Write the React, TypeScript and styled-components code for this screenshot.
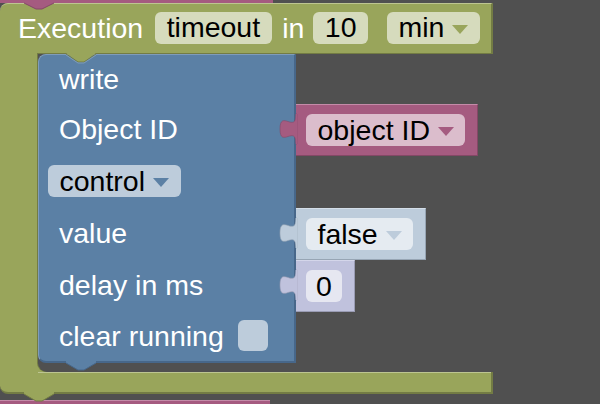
import React from "react";
import styled, { createGlobalStyle } from "styled-components";

const GlobalStyle = createGlobalStyle`
  html, body {
    margin: 0;
    padding: 0;
    background: #505050;
  }
  body {
    font-family: "Liberation Sans", Arial, sans-serif;
  }
`;

const c = {
  canvas: "#505050",
  green: "#99a55b",
  greenLight: "#bdc591",
  greenDark: "#737c44",
  greenField: "#d6dbbd",
  blue: "#5b80a5",
  blueLight: "#7f9cba",
  blueDark: "#47678a",
  blueField: "#bdccdb",
  pink: "#a55b80",
  pinkLight: "#c48ba8",
  pinkDark: "#844866",
  pinkField: "#dbbdcc",
  bool: "#bdccdb",
  boolLight: "#d4dee9",
  boolDark: "#97a5b4",
  boolField: "#e5ebf1",
  num: "#c0c2dd",
  numLight: "#d4d6ea",
  numDark: "#9a9cb4",
  numField: "#e6e7f1",
};

const FONT = 28.5;

const Canvas = styled.div`
  width: 600px;
  height: 404px;
  overflow: hidden;
  display: flex;
  flex-direction: column;
  align-items: flex-start;
  background: ${c.canvas};
`;

const PinkTop = styled.div`
  position: relative;
  flex-shrink: 0;
  width: 273px;
  height: 3px;
  background: ${c.pink};
`;

const PinkBottom = styled.div`
  flex-shrink: 0;
  width: 270px;
  height: 4px;
  box-sizing: border-box;
  background: ${c.pink};
  border-top: 1px solid ${c.pinkLight};
`;

const Tab = styled.svg<{ $left: number }>`
  position: absolute;
  top: 100%;
  left: ${(p) => p.$left}px;
  overflow: visible;
`;

const GreenBlock = styled.div`
  width: 493px;
  flex-shrink: 0;
  display: flex;
  flex-direction: column;
`;

const Header = styled.div`
  height: 50px;
  box-sizing: border-box;
  display: flex;
  align-items: center;
  padding: 0 0 2px 18px;
  background: ${c.green};
  border-top: 1px solid ${c.greenLight};
  border-right: 2px solid ${c.greenDark};
  border-top-left-radius: 8px;
`;

const Label = styled.span<{ $gap?: number }>`
  color: #fff;
  font-size: ${FONT}px;
  line-height: 32px;
  white-space: nowrap;
  margin-left: ${(p) => p.$gap ?? 0}px;
`;

const Field = styled.span<{ $bg: string; $gap?: number; $pad?: number }>`
  display: inline-flex;
  align-items: center;
  gap: 8px;
  height: 32px;
  padding: 0 ${(p) => p.$pad ?? 11.5}px;
  border-radius: 6px;
  background: ${(p) => p.$bg};
  color: #000;
  font-size: ${FONT}px;
  white-space: nowrap;
  margin-left: ${(p) => p.$gap ?? 0}px;
`;

const Arrow = styled.span<{ $color: string }>`
  width: 0;
  height: 0;
  margin-top: 3px;
  border-left: 8.5px solid transparent;
  border-right: 8.5px solid transparent;
  border-top: 9px solid ${(p) => p.$color};
`;

const Middle = styled.div`
  display: flex;
  height: 319px;
  background: ${c.green};
`;

const Arm = styled.div`
  width: 38px;
  flex-shrink: 0;
`;

const Slot = styled.div`
  flex: 1;
  display: flex;
  flex-direction: column;
  background: ${c.canvas};
  border-top: 1px solid ${c.greenDark};
  border-bottom-left-radius: 9px;
  box-shadow: -1px 0 0 ${c.greenDark};
`;

const Row = styled.div<{ $h: number }>`
  display: flex;
  height: ${(p) => p.$h}px;
`;

const Cell = styled.div<{ $first?: boolean; $last?: boolean }>`
  position: relative;
  width: 258px;
  flex-shrink: 0;
  box-sizing: border-box;
  display: flex;
  align-items: center;
  padding: 0 0 2px 20px;
  background: ${c.blue};
  border-left: 1px solid ${c.blueLight};
  border-right: 2px solid ${c.blueDark};
  ${(p) =>
    p.$first &&
    `border-top: 1px solid ${c.blueLight}; border-top-left-radius: 8px;`}
  ${(p) =>
    p.$last &&
    `border-bottom: 2px solid ${c.blueDark}; border-bottom-left-radius: 8px;`}
`;

const Notch = styled.svg<{ $left: number; $top?: number }>`
  position: absolute;
  left: ${(p) => p.$left}px;
  top: ${(p) => (p.$top !== undefined ? `${p.$top}px` : "100%")};
  overflow: visible;
`;

const ValueBlock = styled.div<{ $bg: string; $light: string; $dark: string }>`
  position: relative;
  display: flex;
  align-items: center;
  box-sizing: border-box;
  height: 100%;
  padding: 0 12px 0 10px;
  background: ${(p) => p.$bg};
  border-top: 1px solid ${(p) => p.$light};
  border-right: 1px solid ${(p) => p.$dark};
  border-bottom: 1px solid ${(p) => p.$dark};
`;

const Plug = styled.svg`
  position: absolute;
  left: -17px;
  top: 9px;
  overflow: visible;
`;

const Checkbox = styled.span`
  width: 30px;
  height: 31px;
  margin-left: 14px;
  border-radius: 6px;
  background: ${c.blueField};
`;

const BottomArm = styled.div`
  position: relative;
  height: 22px;
  box-sizing: border-box;
  margin-bottom: 6px;
  background: linear-gradient(${c.greenLight}, ${c.greenLight}) right top /
      calc(100% - 38px) 1px no-repeat,
    ${c.green};
  border-right: 2px solid ${c.greenDark};
  border-bottom: 2px solid ${c.greenDark};
  border-bottom-left-radius: 8px;
`;

const TabDown: React.FC<{ fill: string; edge: string; depth: number }> = ({
  fill,
  edge,
  depth,
}) => (
  <>
    <path d={`M0,0 H30 V2 L18,${depth} H12 L0,2 Z`} fill={fill} />
    <path
      d={`M0,2 L12,${depth} H18 L30,2`}
      fill="none"
      stroke={edge}
      strokeWidth="1"
    />
  </>
);

interface ValueProps {
  bg: string;
  light: string;
  dark: string;
  children: React.ReactNode;
}

const Value: React.FC<ValueProps> = ({ bg, light, dark, children }) => (
  <ValueBlock $bg={bg} $light={light} $dark={dark}>
    <Plug width="18" height="32">
      <path
        d="M18,0 H17 C17,20 1,-5 1,15 S17,10 17,30 H18 Z"
        fill={bg}
        stroke={dark}
        strokeWidth="0.6"
      />
      <path d="M17.5,0 V30" stroke={bg} strokeWidth="1.5" />
    </Plug>
    {children}
  </ValueBlock>
);

const App: React.FC = () => {
  return (
    <Canvas>
      <GlobalStyle />
      <PinkTop>
        <Tab $left={24} width="30" height="7">
          <path d="M0,0 H30 L18,6 H12 Z" fill={c.pink} />
          <path d="M0,0 L12,6 H18 L30,0" fill="none" stroke={c.pinkDark} />
        </Tab>
      </PinkTop>

      <GreenBlock>
        <Header>
          <Label>Execution</Label>
          <Field $bg={c.greenField} $gap={12}>
            timeout
          </Field>
          <Label $gap={10.5}>in</Label>
          <Field $bg={c.greenField} $gap={9}>
            10
          </Field>
          <Field $bg={c.greenField} $gap={19}>
            min
            <Arrow $color={c.green} />
          </Field>
        </Header>

        <Middle>
          <Arm />
          <Slot>
            <Row $h={50}>
              <Cell $first>
                <Notch $left={27} $top={-2} width="30" height="10">
                  <path d="M0,0 H30 L18,9 H12 Z" fill={c.green} />
                  <path
                    d="M0,1 L12,9 H18 L30,1"
                    fill="none"
                    stroke={c.greenDark}
                  />
                  <path
                    d="M0,2 L12,10 H18 L30,2"
                    fill="none"
                    stroke={c.blueLight}
                  />
                </Notch>
                <Label>write</Label>
              </Cell>
            </Row>
            <Row $h={52}>
              <Cell>
                <Label>Object ID</Label>
              </Cell>
              <Value bg={c.pink} light={c.pinkLight} dark={c.pinkDark}>
                <Field $bg={c.pinkField}>
                  object ID
                  <Arrow $color={c.pink} />
                </Field>
              </Value>
            </Row>
            <Row $h={52}>
              <Cell>
                <Field $bg={c.blueField} $gap={-11}>
                  control
                  <Arrow $color={c.blue} />
                </Field>
              </Cell>
            </Row>
            <Row $h={52}>
              <Cell>
                <Label>value</Label>
              </Cell>
              <Value bg={c.bool} light={c.boolLight} dark={c.boolDark}>
                <Field $bg={c.boolField}>
                  false
                  <Arrow $color={c.bool} />
                </Field>
              </Value>
            </Row>
            <Row $h={52}>
              <Cell>
                <Label>delay in ms</Label>
              </Cell>
              <Value bg={c.num} light={c.numLight} dark={c.numDark}>
                <Field $bg={c.numField} $pad={10}>
                  0
                </Field>
              </Value>
            </Row>
            <Row $h={51}>
              <Cell $last>
                <Label>clear running</Label>
                <Checkbox />
                <Notch $left={27} width="30" height="10">
                  <TabDown fill={c.blue} edge={c.blueDark} depth={9} />
                </Notch>
              </Cell>
            </Row>
          </Slot>
        </Middle>

        <BottomArm>
          <Tab $left={24} width="30" height="10">
            <TabDown fill={c.green} edge={c.greenDark} depth={9} />
          </Tab>
        </BottomArm>
      </GreenBlock>

      <PinkBottom />
    </Canvas>
  );
};

export default App;
